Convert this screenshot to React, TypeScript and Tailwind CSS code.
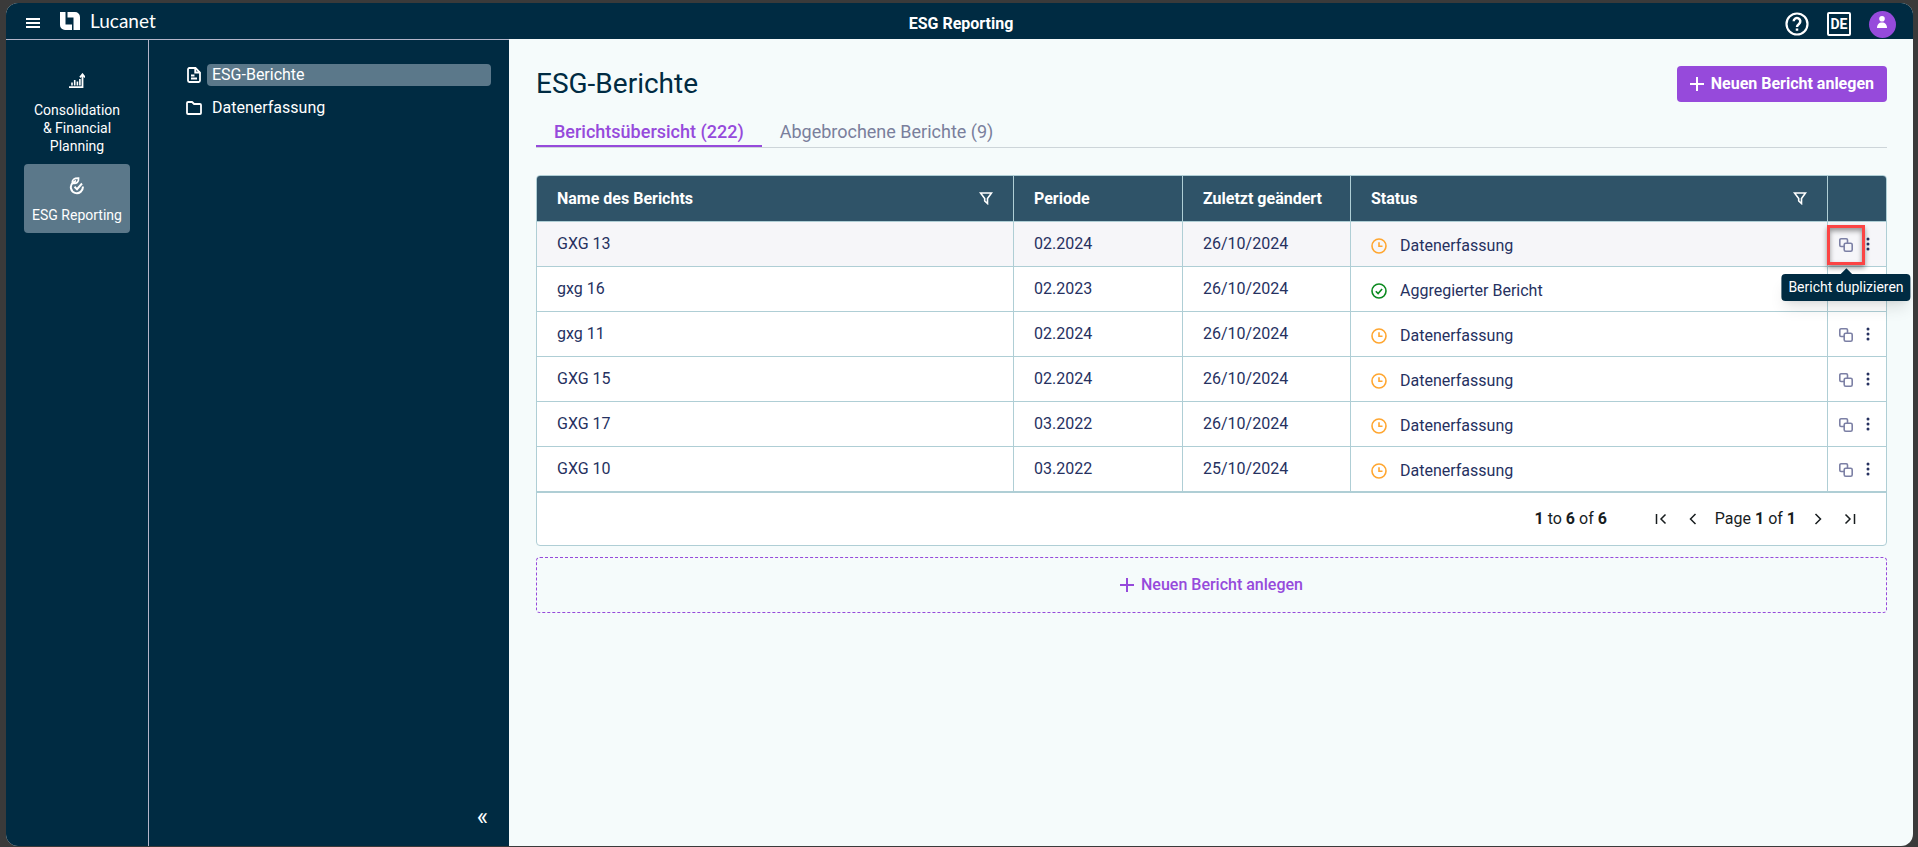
import React from 'react';

type Status = 'pending' | 'done';

interface Report {
  name: string;
  period: string;
  changed: string;
  status: Status;
}

const reports: Report[] = [
  { name: 'GXG 13', period: '02.2024', changed: '26/10/2024', status: 'pending' },
  { name: 'gxg 16', period: '02.2023', changed: '26/10/2024', status: 'done' },
  { name: 'gxg 11', period: '02.2024', changed: '26/10/2024', status: 'pending' },
  { name: 'GXG 15', period: '02.2024', changed: '26/10/2024', status: 'pending' },
  { name: 'GXG 17', period: '03.2022', changed: '26/10/2024', status: 'pending' },
  { name: 'GXG 10', period: '03.2022', changed: '25/10/2024', status: 'pending' },
];

const statusLabels: Record<Status, string> = {
  pending: 'Datenerfassung',
  done: 'Aggregierter Bericht',
};

const LogoIcon = () => (
  <svg width="20" height="18" viewBox="0 0 20 18" fill="currentColor" aria-hidden="true">
    <path d="M0 0h5.500v12.500H12V18H5a5 5 0 0 1-5-5z" />
    <path d="M7.500 0H15a5 5 0 0 1 5 5v13h-6.500V5.500h-6z" />
  </svg>
);

const ChartIcon = () => (
  <svg width="16" height="16" viewBox="0 0 16 16" fill="none" stroke="currentColor" strokeWidth="1.800" aria-hidden="true">
    <path d="M0 14.200h13.500V3" />
    <path d="m11 4.300 2.500-3 2.500 3" />
    <path d="M3 12.500V9.500M5.700 12.500V7M8.400 12.500V8.500M10.900 12.500V6" strokeWidth="1.600" />
  </svg>
);

const LeafIcon = () => (
  <svg width="16" height="18" viewBox="0 0 16 18" fill="none" stroke="currentColor" strokeWidth="2" aria-hidden="true">
    <path d="M3.600 6A6 6 0 1 0 13.800 9.500" />
    <path d="M3.600 6.200C2.600 2.600 5 1 9.600 1.100 10 4.800 7.800 7 3.600 6.200zM3.800 6l3.200-2.500" strokeWidth="1.600" />
    <path d="m5.500 9.800 2.500 2.400L13 6.500" />
  </svg>
);

const DocIcon = () => (
  <svg width="14" height="16" viewBox="0 0 14 16" fill="none" stroke="currentColor" strokeWidth="1.800" aria-hidden="true">
    <path d="M2.300 1H8.500l4.500 4.500v8c0 .8-.6 1.500-1.400 1.500H2.300C1.500 15 1 14.300 1 13.500v-11C1 1.700 1.500 1 2.300 1z" />
    <path d="M4 8.500h3.500M4 11.500h6" />
    <path d="M8.200 1v4.500h4.500" />
  </svg>
);

const FolderIcon = () => (
  <svg width="16" height="14" viewBox="0 0 16 14" fill="none" stroke="currentColor" strokeWidth="1.800" strokeLinejoin="round" aria-hidden="true">
    <path d="M1 2c0-.7.400-1 1.100-1h4l2 2h5.800c.7 0 1.100.4 1.100 1.100v7.800c0 .7-.4 1.100-1.100 1.100H2.100c-.7 0-1.100-.4-1.100-1.100z" />
  </svg>
);

const FilterIcon = () => (
  <svg width="14" height="13" viewBox="0 0 14 13" fill="none" stroke="currentColor" strokeWidth="1.600" aria-hidden="true">
    <path d="M1.500 1h11L8.500 6.500v5L5.700 9V6.500z" />
  </svg>
);

const StatusIcon = ({ status }: { status: Status }) =>
  status === 'done' ? (
    <svg width="16" height="16" viewBox="0 0 16 16" fill="none" stroke="#0b8a1f" strokeWidth="1.600" aria-hidden="true">
      <circle cx="8" cy="8" r="7" />
      <path d="m4.800 8.200 2.300 2.300 4-4.500" />
    </svg>
  ) : (
    <svg width="16" height="16" viewBox="0 0 16 16" fill="none" stroke="#ffa630" strokeWidth="1.600" aria-hidden="true">
      <circle cx="8" cy="8" r="7" />
      <path d="M8 4.300V8.300h3.500" />
    </svg>
  );

const CopyIcon = () => (
  <svg width="14" height="14" viewBox="0 0 14 14" fill="none" stroke="currentColor" strokeWidth="1.600" aria-hidden="true">
    <path d="M5 8.500H2A1.200 1.200 0 0 1 .8 7.300V2A1.200 1.200 0 0 1 2 .8h5.300A1.200 1.200 0 0 1 8.500 2v3" />
    <rect x="5.200" y="5.200" width="8" height="8" rx="1.500" />
  </svg>
);

const DotsIcon = () => (
  <svg width="4" height="14" viewBox="0 0 4 14" fill="currentColor" aria-hidden="true">
    <circle cx="2" cy="2" r="1.500" />
    <circle cx="2" cy="7" r="1.500" />
    <circle cx="2" cy="12" r="1.500" />
  </svg>
);

const PlusIcon = () => (
  <svg width="14" height="14" viewBox="0 0 14 14" fill="none" stroke="currentColor" strokeWidth="2" aria-hidden="true">
    <path d="M7 0v14M0 7h14" />
  </svg>
);

const PagerIcon = ({ d }: { d: string }) => (
  <svg width="12" height="12" viewBox="0 0 12 12" fill="none" stroke="currentColor" strokeWidth="1.500" aria-hidden="true">
    <path d={d} />
  </svg>
);

const TopBar = () => (
  <header className="grid h-9 grid-cols-3 items-center bg-[#002b42] pr-[17px] pl-5 text-white">
    <div className="flex items-center gap-5">
      <button type="button" aria-label="Menü" className="pt-1">
        <svg width="14" height="12" viewBox="0 0 14 12" stroke="currentColor" strokeWidth="2" aria-hidden="true">
          <path d="M0 2h14M0 6h14M0 10h14" />
        </svg>
      </button>
      <a href="#" className="flex items-center gap-[10px] text-[19px] leading-5">
        <LogoIcon />
        <span className="font-[Lato,sans-serif]">Lucanet</span>
      </a>
    </div>
    <div className="pt-[6px] text-center text-base leading-6 font-bold">ESG Reporting</div>
    <div className="flex items-center justify-end gap-[18px] pt-[6px]">
      <button type="button" aria-label="Hilfe">
        <svg width="24" height="24" viewBox="0 0 24 24" fill="none" stroke="currentColor" strokeWidth="2.200" aria-hidden="true">
          <circle cx="12" cy="12" r="10.500" />
          <path d="M8.700 9.300a3.300 3.300 0 1 1 5.300 2.600c-1.200.9-2 1.500-2 3.100M12 16.500v2.300" strokeWidth="2.500" />
        </svg>
      </button>
      <button type="button" className="flex h-6 w-6 items-center justify-center rounded-xs border-2 border-white text-sm leading-5 font-bold">
        DE
      </button>
      <button type="button" aria-label="Profil" className="flex h-[27px] w-[27px] items-center justify-center rounded-full bg-[#964adb] pb-1">
        <svg width="10" height="12" viewBox="0 0 10 12" fill="currentColor" aria-hidden="true">
          <circle cx="5" cy="2.800" r="2.800" />
          <path d="M0 12C0 8.500 2 6.500 5 6.500s5 2 5 5.500z" />
        </svg>
      </button>
    </div>
  </header>
);

const ModuleRail = () => (
  <nav className="flex w-[143px] flex-col items-center border-r border-[#b3b5c9] pt-[23px] text-center text-sm leading-[18px]">
    <a href="#" className="flex w-[106px] flex-col items-center gap-3 rounded px-1 pt-[10px] pb-[9px]">
      <ChartIcon />
      Consolidation &amp;&nbsp;Financial Planning
    </a>
    <a href="#" className="flex w-[106px] flex-col items-center gap-[11px] rounded bg-[#5b788a] pt-[13px] pb-[9px]">
      <LeafIcon />
      ESG Reporting
    </a>
  </nav>
);

const SideMenu = () => (
  <aside className="flex w-[360px] flex-col justify-between pt-6 pr-[18px] pb-4 pl-[37px]">
    <ul className="flex flex-col gap-[11px] text-base leading-[22px]">
      <li>
        <a href="#" className="flex items-center gap-[5px]">
          <span className="flex w-4 justify-center"><DocIcon /></span>
          <span className="flex-1 rounded bg-[#5b788a] px-[5px]">ESG-Berichte</span>
        </a>
      </li>
      <li>
        <a href="#" className="flex items-center gap-[5px]">
          <FolderIcon />
          <span className="flex-1 px-[5px]">Datenerfassung</span>
        </a>
      </li>
    </ul>
    <button type="button" aria-label="Menü einklappen" className="self-end px-[3px] pb-px text-2xl leading-6">
      «
    </button>
  </aside>
);

const headCell = 'border-r border-b border-[#afced5] px-5 text-left font-bold last:border-r-0';
const bodyCell = 'border-r border-b border-[#afced5] px-5 last:border-r-0';

const ReportTable = () => (
  <div className="mt-[27px] rounded border border-[#afced5] bg-white">
    <table className="w-full table-fixed border-separate border-spacing-0 text-base">
      <colgroup>
        <col />
        <col className="w-[169px]" />
        <col className="w-[168px]" />
        <col />
        <col className="w-[58px]" />
      </colgroup>
      <thead>
        <tr className="h-[46px] bg-[#2f5368] text-white">
          <th className={`${headCell} rounded-tl-[3px]`}>
            <span className="flex items-center justify-between">
              Name des Berichts
              <button type="button" aria-label="Name filtern"><FilterIcon /></button>
            </span>
          </th>
          <th className={headCell}>Periode</th>
          <th className={headCell}>Zuletzt geändert</th>
          <th className={headCell}>
            <span className="flex items-center justify-between">
              Status
              <button type="button" aria-label="Status filtern"><FilterIcon /></button>
            </span>
          </th>
          <th className={`${headCell} rounded-tr-[3px]`} aria-label="Aktionen" />
        </tr>
      </thead>
      <tbody className="text-[#26315f]">
        {reports.map((report, i) => (
          <tr key={report.name} className={i === 0 ? 'h-[45px] bg-[#f6f6f9]' : 'h-[45px]'}>
            <td className={bodyCell}>{report.name}</td>
            <td className={bodyCell}>{report.period}</td>
            <td className={bodyCell}>{report.changed}</td>
            <td className={bodyCell}>
              <span className="flex items-center gap-[13px] pt-[3px]">
                <StatusIcon status={report.status} />
                {statusLabels[report.status]}
              </span>
            </td>
            <td className="border-b border-[#afced5] pl-[11px]">
              <div className="flex items-center gap-[13px] pt-0.5">
                <div className="relative flex">
                  <button type="button" aria-label="Bericht duplizieren" className="text-[#7c80a5]">
                    <CopyIcon />
                  </button>
                  {i === 0 && (
                    <>
                      <div className="pointer-events-none absolute -inset-x-3 -inset-y-[13px] border-3 border-[#fb4444] shadow-[0_3px_5px_rgba(0,0,0,0.4),inset_0_3px_5px_rgba(0,0,0,0.4)]" />
                      <div
                        role="tooltip"
                        className="absolute top-9 left-1/2 z-10 -translate-x-1/2 rounded bg-[#002b42] px-[7px] py-1 text-sm leading-[19px] whitespace-nowrap text-white shadow-lg"
                      >
                        <span className="absolute -top-1 left-1/2 h-2 w-2 -translate-x-1/2 rotate-45 bg-[#002b42]" />
                        Bericht duplizieren
                      </div>
                    </>
                  )}
                </div>
                <button type="button" aria-label="Weitere Aktionen" className="pb-0.5">
                  <DotsIcon />
                </button>
              </div>
            </td>
          </tr>
        ))}
      </tbody>
    </table>
    <div className="flex h-[53px] items-center justify-end gap-12 border-t border-[#afced5] pr-[30px] text-base text-[#181d1f]">
      <span>
        <b>1</b> to <b>6</b> of <b>6</b>
      </span>
      <div className="flex items-center">
        <button type="button" aria-label="Erste Seite" className="mr-5"><PagerIcon d="M1.500 1v10M10.500 1.500 6 6l4.500 4.500" /></button>
        <button type="button" aria-label="Vorherige Seite" className="mr-4"><PagerIcon d="M8.500 1 3.500 6l5 5" /></button>
        <span>
          Page <b>1</b> of <b>1</b>
        </span>
        <button type="button" aria-label="Nächste Seite" className="ml-4"><PagerIcon d="m3.500 1 5 5-5 5" /></button>
        <button type="button" aria-label="Letzte Seite" className="ml-5"><PagerIcon d="M10.500 1v10M1.500 1.500 6 6l-4.500 4.500" /></button>
      </div>
    </div>
  </div>
);

const App = () => {
  return (
    <div className="flex min-h-screen bg-[#3a3a3a] pt-[3px] pr-[5px] pb-px pl-[6px] font-[Roboto,sans-serif]">
      <div className="flex flex-1 flex-col overflow-hidden rounded-xl bg-[#f5fbfb]">
        <TopBar />
        <div className="flex flex-1">
          <div className="flex border-t border-[#b3b5c9] bg-[#002b42] text-white">
            <ModuleRail />
            <SideMenu />
          </div>
          <main className="flex-1 pt-[27px] pr-[26px] pl-[27px]">
            <div className="flex items-center justify-between">
              <h1 className="text-[28px] leading-9 text-[#002b42]">ESG-Berichte</h1>
              <button type="button" className="flex h-9 items-center gap-[7px] rounded bg-[#964adb] px-[13px] text-base font-bold text-white">
                <PlusIcon />
                Neuen Bericht anlegen
              </button>
            </div>
            <div role="tablist" className="mt-4 flex border-b border-[#cdd5d9] text-lg leading-[27px]">
              <button type="button" role="tab" aria-selected="true" className="border-b-2 border-[#964adb] px-[18px] font-medium text-[#964adb]">
                Berichtsübersicht (222)
              </button>
              <button type="button" role="tab" aria-selected="false" className="border-b-2 border-transparent px-[18px] text-[#7a7f9c]">
                Abgebrochene Berichte (9)
              </button>
            </div>
            <ReportTable />
            <button
              type="button"
              className="mt-[11px] flex h-14 w-full items-center justify-center gap-[7px] rounded border border-dashed border-[#964adb] text-base font-medium text-[#964adb]"
            >
              <PlusIcon />
              Neuen Bericht anlegen
            </button>
          </main>
        </div>
      </div>
    </div>
  );
};

export default App;
